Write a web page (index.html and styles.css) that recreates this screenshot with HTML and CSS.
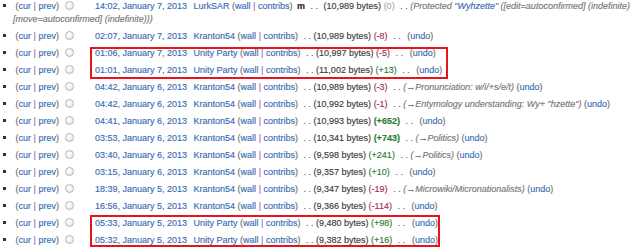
FILE: index.html
```html
<!DOCTYPE html>
<html lang="en">
<head>
    <meta charset="UTF-8">
    <title>Revision history</title>
    <link rel="stylesheet" href="styles.css">
</head>
<body>
    <div class="history">
        <ul class="revs">
            <li>
                <span class="links">(<a href="#">cur</a> <span class="sep">|</span> <a href="#">prev</a>)</span>
                <input type="radio" class="pick" name="diff">
                <a class="date" href="#">14:02, January 7, 2013</a>
                <span class="user"><a href="#">LurkSAR</a> <span class="tools">(<a href="#">wall</a> <span class="sep">|</span> <a href="#">contribs</a>)</span></span>
                <b class="minor">m</b>
                <span class="dots">. .</span>
                <span class="size">(10,989 bytes)</span>
                <span class="delta zero">(0)</span>
                <span class="dots">. .</span>
                <span class="comment">(Protected "<a href="#">Wyhzette</a>" ([edit=autoconfirmed] (indefinite)</span>
                <span class="comment">[move=autoconfirmed] (indefinite)))</span>
            </li>
            <li>
                <span class="links">(<a href="#">cur</a> <span class="sep">|</span> <a href="#">prev</a>)</span>
                <input type="radio" class="pick" name="diff">
                <a class="date" href="#">02:07, January 7, 2013</a>
                <span class="user"><a href="#">Kranton54</a> <span class="tools">(<a href="#">wall</a> <span class="sep">|</span> <a href="#">contribs</a>)</span></span>
                <span class="dots">. .</span>
                <span class="size">(10,989 bytes)</span>
                <span class="delta neg">(-8)</span>
                <span class="dots">. .</span>
                <span class="undo">(<a href="#">undo</a>)</span>
            </li>
            <li>
                <span class="links">(<a href="#">cur</a> <span class="sep">|</span> <a href="#">prev</a>)</span>
                <input type="radio" class="pick" name="diff">
                <a class="date" href="#">01:06, January 7, 2013</a>
                <span class="user"><a href="#">Unity Party</a> <span class="tools">(<a href="#">wall</a> <span class="sep">|</span> <a href="#">contribs</a>)</span></span>
                <span class="dots">. .</span>
                <span class="size">(10,997 bytes)</span>
                <span class="delta neg">(-5)</span>
                <span class="dots">. .</span>
                <span class="undo">(<a href="#">undo</a>)</span>
            </li>
            <li>
                <span class="links">(<a href="#">cur</a> <span class="sep">|</span> <a href="#">prev</a>)</span>
                <input type="radio" class="pick" name="diff">
                <a class="date" href="#">01:01, January 7, 2013</a>
                <span class="user"><a href="#">Unity Party</a> <span class="tools">(<a href="#">wall</a> <span class="sep">|</span> <a href="#">contribs</a>)</span></span>
                <span class="dots">. .</span>
                <span class="size">(11,002 bytes)</span>
                <span class="delta pos">(+13)</span>
                <span class="dots">. .</span>
                <span class="undo">(<a href="#">undo</a>)</span>
            </li>
            <li>
                <span class="links">(<a href="#">cur</a> <span class="sep">|</span> <a href="#">prev</a>)</span>
                <input type="radio" class="pick" name="diff">
                <a class="date" href="#">04:42, January 6, 2013</a>
                <span class="user"><a href="#">Kranton54</a> <span class="tools">(<a href="#">wall</a> <span class="sep">|</span> <a href="#">contribs</a>)</span></span>
                <span class="dots">. .</span>
                <span class="size">(10,989 bytes)</span>
                <span class="delta neg">(-3)</span>
                <span class="dots">. .</span>
                <span class="comment">(<a href="#">→</a>Pronunciation: w/i/+s/e/t)</span>
                <span class="undo">(<a href="#">undo</a>)</span>
            </li>
            <li>
                <span class="links">(<a href="#">cur</a> <span class="sep">|</span> <a href="#">prev</a>)</span>
                <input type="radio" class="pick" name="diff">
                <a class="date" href="#">04:42, January 6, 2013</a>
                <span class="user"><a href="#">Kranton54</a> <span class="tools">(<a href="#">wall</a> <span class="sep">|</span> <a href="#">contribs</a>)</span></span>
                <span class="dots">. .</span>
                <span class="size">(10,992 bytes)</span>
                <span class="delta neg">(-1)</span>
                <span class="dots">. .</span>
                <span class="comment">(<a href="#">→</a>Entymology understanding: Wy+ "hzette")</span>
                <span class="undo">(<a href="#">undo</a>)</span>
            </li>
            <li>
                <span class="links">(<a href="#">cur</a> <span class="sep">|</span> <a href="#">prev</a>)</span>
                <input type="radio" class="pick" name="diff">
                <a class="date" href="#">04:41, January 6, 2013</a>
                <span class="user"><a href="#">Kranton54</a> <span class="tools">(<a href="#">wall</a> <span class="sep">|</span> <a href="#">contribs</a>)</span></span>
                <span class="dots">. .</span>
                <span class="size">(10,993 bytes)</span>
                <strong class="delta pos">(+652)</strong>
                <span class="dots">. .</span>
                <span class="undo">(<a href="#">undo</a>)</span>
            </li>
            <li>
                <span class="links">(<a href="#">cur</a> <span class="sep">|</span> <a href="#">prev</a>)</span>
                <input type="radio" class="pick" name="diff">
                <a class="date" href="#">03:53, January 6, 2013</a>
                <span class="user"><a href="#">Kranton54</a> <span class="tools">(<a href="#">wall</a> <span class="sep">|</span> <a href="#">contribs</a>)</span></span>
                <span class="dots">. .</span>
                <span class="size">(10,341 bytes)</span>
                <strong class="delta pos">(+743)</strong>
                <span class="dots">. .</span>
                <span class="comment">(<a href="#">→</a>Politics)</span>
                <span class="undo">(<a href="#">undo</a>)</span>
            </li>
            <li>
                <span class="links">(<a href="#">cur</a> <span class="sep">|</span> <a href="#">prev</a>)</span>
                <input type="radio" class="pick" name="diff">
                <a class="date" href="#">03:40, January 6, 2013</a>
                <span class="user"><a href="#">Kranton54</a> <span class="tools">(<a href="#">wall</a> <span class="sep">|</span> <a href="#">contribs</a>)</span></span>
                <span class="dots">. .</span>
                <span class="size">(9,598 bytes)</span>
                <span class="delta pos">(+241)</span>
                <span class="dots">. .</span>
                <span class="comment">(<a href="#">→</a>Politics)</span>
                <span class="undo">(<a href="#">undo</a>)</span>
            </li>
            <li>
                <span class="links">(<a href="#">cur</a> <span class="sep">|</span> <a href="#">prev</a>)</span>
                <input type="radio" class="pick" name="diff">
                <a class="date" href="#">03:15, January 6, 2013</a>
                <span class="user"><a href="#">Kranton54</a> <span class="tools">(<a href="#">wall</a> <span class="sep">|</span> <a href="#">contribs</a>)</span></span>
                <span class="dots">. .</span>
                <span class="size">(9,357 bytes)</span>
                <span class="delta pos">(+10)</span>
                <span class="dots">. .</span>
                <span class="undo">(<a href="#">undo</a>)</span>
            </li>
            <li>
                <span class="links">(<a href="#">cur</a> <span class="sep">|</span> <a href="#">prev</a>)</span>
                <input type="radio" class="pick" name="diff">
                <a class="date" href="#">18:39, January 5, 2013</a>
                <span class="user"><a href="#">Kranton54</a> <span class="tools">(<a href="#">wall</a> <span class="sep">|</span> <a href="#">contribs</a>)</span></span>
                <span class="dots">. .</span>
                <span class="size">(9,347 bytes)</span>
                <span class="delta neg">(-19)</span>
                <span class="dots">. .</span>
                <span class="comment">(<a href="#">→</a>Microwiki/Micronationalists)</span>
                <span class="undo">(<a href="#">undo</a>)</span>
            </li>
            <li>
                <span class="links">(<a href="#">cur</a> <span class="sep">|</span> <a href="#">prev</a>)</span>
                <input type="radio" class="pick" name="diff">
                <a class="date" href="#">16:56, January 5, 2013</a>
                <span class="user"><a href="#">Kranton54</a> <span class="tools">(<a href="#">wall</a> <span class="sep">|</span> <a href="#">contribs</a>)</span></span>
                <span class="dots">. .</span>
                <span class="size">(9,366 bytes)</span>
                <span class="delta neg">(-114)</span>
                <span class="dots">. .</span>
                <span class="undo">(<a href="#">undo</a>)</span>
            </li>
            <li>
                <span class="links">(<a href="#">cur</a> <span class="sep">|</span> <a href="#">prev</a>)</span>
                <input type="radio" class="pick" name="diff">
                <a class="date" href="#">05:33, January 5, 2013</a>
                <span class="user"><a href="#">Unity Party</a> <span class="tools">(<a href="#">wall</a> <span class="sep">|</span> <a href="#">contribs</a>)</span></span>
                <span class="dots">. .</span>
                <span class="size">(9,480 bytes)</span>
                <span class="delta pos">(+98)</span>
                <span class="dots">. .</span>
                <span class="undo">(<a href="#">undo</a>)</span>
            </li>
            <li>
                <span class="links">(<a href="#">cur</a> <span class="sep">|</span> <a href="#">prev</a>)</span>
                <input type="radio" class="pick" name="diff">
                <a class="date" href="#">05:32, January 5, 2013</a>
                <span class="user"><a href="#">Unity Party</a> <span class="tools">(<a href="#">wall</a> <span class="sep">|</span> <a href="#">contribs</a>)</span></span>
                <span class="dots">. .</span>
                <span class="size">(9,382 bytes)</span>
                <span class="delta pos">(+16)</span>
                <span class="dots">. .</span>
                <span class="undo">(<a href="#">undo</a>)</span>
            </li>
        </ul>

        <!-- red highlight frames drawn over the list -->
        <div class="mark mark-top"></div>
        <div class="mark mark-bottom"></div>
    </div>
</body>
</html>
```

FILE: styles.css
```css
body {
    margin: 0;
    background-color: white;
    font-family: "Liberation Sans", Arial, sans-serif;
    font-size: 9px;
    color: #3c3c3c;
    -webkit-text-stroke: 0.15px;
}
a {
    color: #3a6db5;
    text-decoration: none;
}
.history {
    position: relative;
    width: 636px;
}
.revs {
    list-style: none;
    margin: 0;
    padding: 0;
}
.revs li {
    padding-left: 13px;
    line-height: 13px;
    margin-bottom: 4px;
}
.revs li::before {
    content: "";
    display: inline-block;
    width: 3px;
    height: 3px;
    background-color: #333;
    margin-left: -10px;
    margin-right: 7px;
    vertical-align: 2px;
}
.links {
    color: #7b6a55;
}
.sep {
    color: #9b6bb5;
}
.pick {
    appearance: none;
    -webkit-appearance: none;
    width: 9px;
    height: 9px;
    margin: 0 0 0 4px;
    border: 1px solid #b5b5b5;
    border-radius: 50%;
    background: radial-gradient(circle at 40% 35%, #fff, #e2e2e2);
    vertical-align: -1px;
}
.date {
    margin-left: 18px;
}
.user {
    margin-left: 4px;
}
.tools {
    color: #7b6a55;
}
.minor {
    color: #222;
    margin-left: 2px;
}
.dots {
    color: #555;
    margin-left: 3px;
}
.minor + .dots {
    margin-right: 3px;
}
.delta.zero {
    color: #aaa;
}
.delta.neg {
    color: #a0304f;
}
.delta.pos {
    color: #2e7d32;
}
.comment {
    font-style: italic;
    color: #777;
}
.undo {
    color: #7b6a55;
    margin-left: 4px;
}
.comment + .undo {
    margin-left: 0;
}
.mark {
    position: absolute;
    left: 90px;
    border: 2px solid #e8141c;
    height: 28px;
}
.mark-top {
    top: 47px;
    width: 354px;
}
.mark-bottom {
    top: 215px;
    width: 346px;
}
```
